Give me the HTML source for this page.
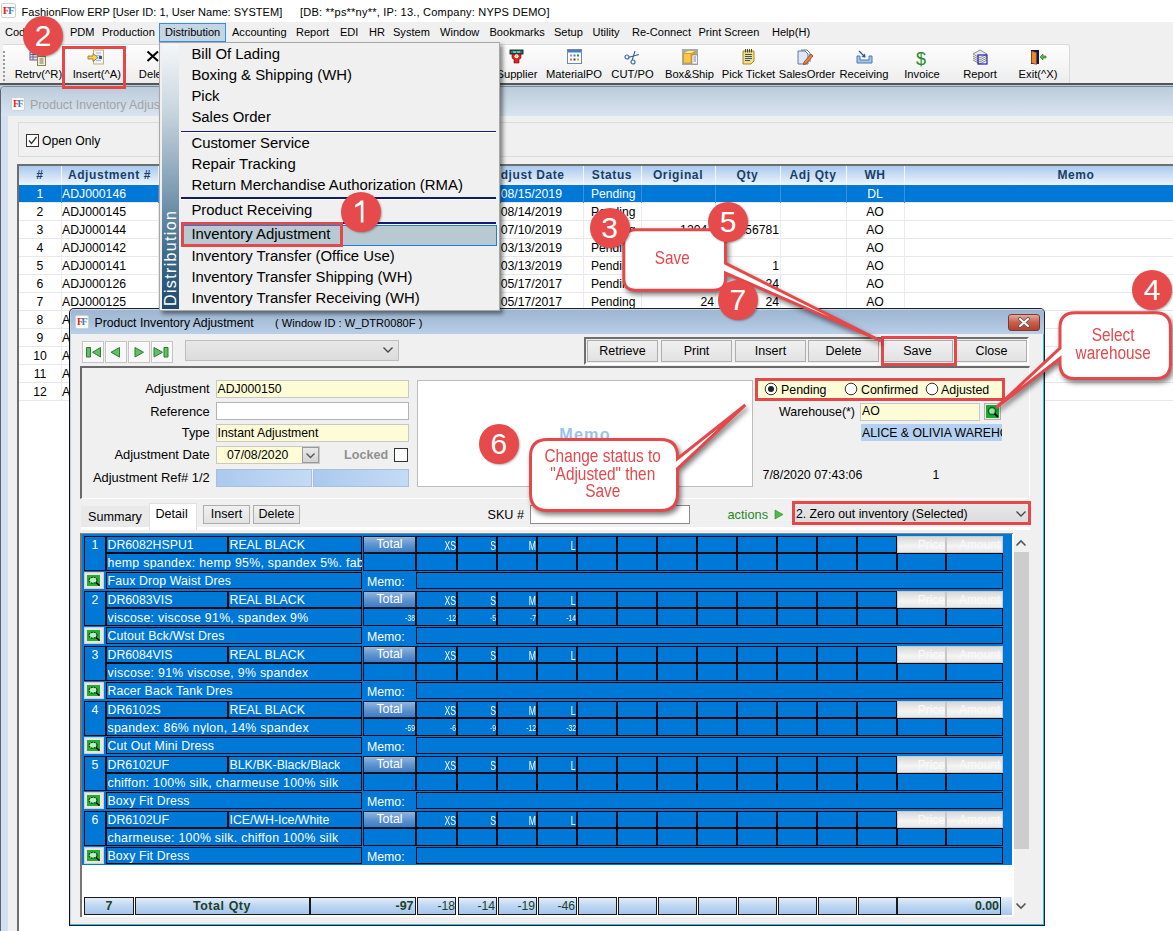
<!DOCTYPE html><html><head><meta charset="utf-8"><style>
*{margin:0;padding:0;box-sizing:border-box}
html,body{width:1173px;height:931px;overflow:hidden;background:#f0f0f0;font-family:"Liberation Sans",sans-serif;font-size:12px;color:#000;position:relative}
.a{position:absolute}
.t{position:absolute;white-space:nowrap;line-height:1}
.ff{position:absolute;width:14px;height:14px;background:#fff;border:1px solid #cfcfcf;border-radius:2px;font-family:"Liberation Serif",serif;font-weight:bold;font-size:10px;line-height:12px;text-align:center;letter-spacing:-1.5px;padding-right:1px}
.ff b{color:#e82020}.ff i{font-style:normal;color:#3a7fb0}
.circ{position:absolute;width:40px;height:40px;border-radius:50%;background:#e64a4a;color:#fff;font-size:30px;line-height:40px;text-align:center;box-shadow:1px 1px 2px rgba(0,0,0,.3)}
.btn{position:absolute;height:22px;background:linear-gradient(#f0f0f0,#e2e2e2);border:1px solid #adadad;font-size:12.5px;line-height:20px;text-align:center}

.c{position:absolute;border:1px solid #050a10;background:#0078d7}
.ct{position:absolute;white-space:nowrap;line-height:1;color:#fff}
.nar{position:absolute;white-space:nowrap;line-height:1;color:#fff;transform-origin:100% 50%}
</style></head><body>
<div class="a" style="left:0px;top:0px;width:1173px;height:22px;background:#fff"></div>
<div class="ff" style="left:1px;top:3px;width:15px;height:15px;font-size:11px;line-height:13px"><b>F</b><i>F</i></div>
<div class="t " style="left:21.5px;top:6.9px;font-size:11.05px;color:#000;">FashionFlow ERP [User ID: 1, User Name: SYSTEM]</div>
<div class="t " style="left:300.0px;top:6.9px;font-size:11.05px;color:#000;letter-spacing:0.2px">[DB: **ps**ny**, IP: 13., Company: NYPS DEMO]</div>
<div class="a" style="left:0px;top:22px;width:1173px;height:21px;background:#f0f0f0"></div>
<div class="a" style="left:159px;top:23px;width:67px;height:19px;background:#c4d5e3;border:1px solid #3d8ee0"></div>
<div class="t " style="left:5.0px;top:27.2px;font-size:11.05px;color:#000;">Code</div>
<div class="t " style="left:70.0px;top:27.2px;font-size:11.05px;color:#000;">PDM</div>
<div class="t " style="left:102.0px;top:27.2px;font-size:11.05px;color:#000;">Production</div>
<div class="t " style="left:165.0px;top:27.2px;font-size:11.05px;color:#000;">Distribution</div>
<div class="t " style="left:232.0px;top:27.2px;font-size:11.05px;color:#000;">Accounting</div>
<div class="t " style="left:296.0px;top:27.2px;font-size:11.05px;color:#000;">Report</div>
<div class="t " style="left:340.0px;top:27.2px;font-size:11.05px;color:#000;">EDI</div>
<div class="t " style="left:369.0px;top:27.2px;font-size:11.05px;color:#000;">HR</div>
<div class="t " style="left:393.0px;top:27.2px;font-size:11.05px;color:#000;">System</div>
<div class="t " style="left:440.0px;top:27.2px;font-size:11.05px;color:#000;">Window</div>
<div class="t " style="left:489.5px;top:27.2px;font-size:11.05px;color:#000;">Bookmarks</div>
<div class="t " style="left:554.0px;top:27.2px;font-size:11.05px;color:#000;">Setup</div>
<div class="t " style="left:592.5px;top:27.2px;font-size:11.05px;color:#000;">Utility</div>
<div class="t " style="left:632.0px;top:27.2px;font-size:11.05px;color:#000;">Re-Connect</div>
<div class="t " style="left:698.5px;top:27.2px;font-size:11.05px;color:#000;">Print Screen</div>
<div class="t " style="left:772.0px;top:27.2px;font-size:11.05px;color:#000;">Help(H)</div>
<div class="a" style="left:0px;top:43px;width:1173px;height:41px;background:#f0f0f0"></div>
<div class="a" style="left:3px;top:44px;width:1067px;height:40px;background:linear-gradient(#fdfdfd,#f6f6f6 50%,#ececec);border:1px solid #dadada;border-left:none;border-bottom:none;border-radius:0 3px 0 0"></div>
<div class="a" style="left:3px;top:51px;width:2px;height:2px;background:#9a9a9a"></div>
<div class="a" style="left:3px;top:55px;width:2px;height:2px;background:#9a9a9a"></div>
<div class="a" style="left:3px;top:59px;width:2px;height:2px;background:#9a9a9a"></div>
<div class="a" style="left:3px;top:63px;width:2px;height:2px;background:#9a9a9a"></div>
<div class="a" style="left:3px;top:67px;width:2px;height:2px;background:#9a9a9a"></div>
<div class="a" style="left:3px;top:71px;width:2px;height:2px;background:#9a9a9a"></div>
<div class="a" style="left:3px;top:75px;width:2px;height:2px;background:#9a9a9a"></div>
<div class="a" style="left:3px;top:79px;width:2px;height:2px;background:#9a9a9a"></div>
<div class="a" style="left:0px;top:83px;width:1173px;height:2px;background:#555"></div>
<div class="t " style="left:-261.6px;width:600px;text-align:center;top:69.1px;font-size:11.2px;color:#000;">Retrv(^R)</div>
<div class="t " style="left:-203.2px;width:600px;text-align:center;top:69.1px;font-size:11.2px;color:#000;">Insert(^A)</div>
<div class="t " style="left:-145.0px;width:600px;text-align:center;top:69.1px;font-size:11.2px;color:#000;">Delete</div>
<div class="t " style="left:217.0px;width:600px;text-align:center;top:69.1px;font-size:11.2px;color:#000;">Supplier</div>
<div class="t " style="left:274.0px;width:600px;text-align:center;top:69.1px;font-size:11.2px;color:#000;">MaterialPO</div>
<div class="t " style="left:332.5px;width:600px;text-align:center;top:69.1px;font-size:11.2px;color:#000;">CUT/PO</div>
<div class="t " style="left:389.5px;width:600px;text-align:center;top:69.1px;font-size:11.2px;color:#000;">Box&amp;Ship</div>
<div class="t " style="left:448.5px;width:600px;text-align:center;top:69.1px;font-size:11.2px;color:#000;">Pick Ticket</div>
<div class="t " style="left:507.0px;width:600px;text-align:center;top:69.1px;font-size:11.2px;color:#000;">SalesOrder</div>
<div class="t " style="left:564.0px;width:600px;text-align:center;top:69.1px;font-size:11.2px;color:#000;">Receiving</div>
<div class="t " style="left:622.0px;width:600px;text-align:center;top:69.1px;font-size:11.2px;color:#000;">Invoice</div>
<div class="t " style="left:680.0px;width:600px;text-align:center;top:69.1px;font-size:11.2px;color:#000;">Report</div>
<div class="t " style="left:738.0px;width:600px;text-align:center;top:69.1px;font-size:11.2px;color:#000;">Exit(^X)</div>
<svg class="a" style="left:29px;top:51px" width="18" height="15" viewBox="0 0 18 15"><rect x="1" y="1" width="8" height="8" fill="#e8e0ee" stroke="#6a5a80" stroke-width="1"/><path d="M1 3.5H9M1 6H9M4 1V9" stroke="#6a5a80" stroke-width="0.9"/><rect x="8.5" y="5.5" width="8" height="9" fill="#f4f0dc" stroke="#8a8050" stroke-width="1"/><path d="M10.5 8H14.5M10.5 10H14.5M10.5 12H14.5" stroke="#6a6040" stroke-width="0.9"/></svg>
<svg class="a" style="left:87px;top:49px" width="18" height="16" viewBox="0 0 18 16"><rect x="6.5" y="1" width="10" height="14" fill="#eef4fb" stroke="#c8b070" stroke-width="1"/><path d="M9 4H14M9 6.5H14M9 9H14M9 11.5H14" stroke="#9ab0d0" stroke-width="0.9"/><rect x="12" y="7" width="3" height="3" fill="#2a5aa0"/><path d="M1 7H6V4.5L11 8.5L6 12.5V10H1Z" fill="#f8d060" stroke="#a07820" stroke-width="0.9"/></svg>
<svg class="a" style="left:146px;top:50px" width="14" height="12" viewBox="0 0 14 12"><path d="M1.5 1.5L12 11M12 1.5L1.5 11" stroke="#000" stroke-width="2"/></svg>
<svg class="a" style="left:509px;top:49px" width="15" height="15" viewBox="0 0 15 15"><rect x="1" y="1" width="13" height="4" fill="#208080" stroke="#000" stroke-width="0.8"/><path d="M4 3H7M8 3H11" stroke="#fff" stroke-width="0.8"/><path d="M3 5V8Q3 10 5 10V14H10V10Q12 10 12 8V5Z" fill="#e82020" stroke="#600" stroke-width="0.6"/><circle cx="7.5" cy="7.3" r="2" fill="#fff"/><circle cx="7.5" cy="7.3" r="1" fill="#dd0"/></svg>
<svg class="a" style="left:567px;top:49px" width="15" height="15" viewBox="0 0 15 15"><rect x="0.5" y="0.5" width="14" height="14" fill="#fafcff" stroke="#6a8ab0" stroke-width="1"/><rect x="1" y="1" width="13" height="2.5" fill="#4a7ac0"/><rect x="3" y="5.5" width="2" height="2" fill="#9090d0"/><rect x="6.5" y="5.5" width="2" height="2" fill="#3080e0"/><rect x="10" y="5.5" width="2" height="2" fill="#20a020"/><rect x="3" y="9.5" width="2" height="2" fill="#f07030"/><rect x="6.5" y="9.5" width="2" height="2" fill="#2040a0"/><rect x="10" y="9.5" width="2" height="2" fill="#e0a020"/></svg>
<svg class="a" style="left:624px;top:50px" width="16" height="15" viewBox="0 0 16 15"><circle cx="3" cy="7" r="2" fill="none" stroke="#3a70b0" stroke-width="1.2"/><circle cx="9" cy="12" r="2" fill="none" stroke="#3a70b0" stroke-width="1.2"/><path d="M4.8 7.3L15 4.5M8.2 10.2L11 1" stroke="#3a6090" stroke-width="1.1"/></svg>
<svg class="a" style="left:682px;top:49px" width="17" height="16" viewBox="0 0 17 16"><rect x="0" y="0" width="16" height="16" fill="#a8a8a8"/><path d="M1.5 4.5L6 2H13L9 4.5Z" fill="#ffe890"/><path d="M1.5 4.5H9V14H1.5Z" fill="#f8c840" stroke="#b08010" stroke-width="0.5"/><path d="M9 4.5L13 2V11L9 14Z" fill="#e0a020"/><rect x="10" y="6" width="5.5" height="9" fill="#f4f4f4" stroke="#777" stroke-width="0.5"/><path d="M11.5 8H14M11.5 10H14M11.5 12H14" stroke="#5070b0" stroke-width="0.8"/></svg>
<svg class="a" style="left:742px;top:49px" width="13" height="16" viewBox="0 0 13 16"><path d="M1 2H12V12L9 15H1Z" fill="#f8e070" stroke="#a08020" stroke-width="0.9"/><path d="M3.5 0V3.5M5.5 0V3.5M7.5 0V3.5M9.5 0V3.5" stroke="#444" stroke-width="1"/><path d="M3 5.5H10M3 7.5H10M3 9.5H10M3 11.5H8" stroke="#3050a0" stroke-width="1"/></svg>
<svg class="a" style="left:797px;top:49px" width="18" height="16" viewBox="0 0 18 16"><path d="M1 2H8L11 5V15H1Z" fill="#dce8f8" stroke="#5a6a8a" stroke-width="0.9"/><path d="M4 1H10L13 4V13" fill="none" stroke="#5a6a8a" stroke-width="0.9"/><path d="M7 13L14 5L16 7L9 15L6.5 15.5Z" fill="#f08040" stroke="#803010" stroke-width="0.7"/></svg>
<svg class="a" style="left:856px;top:50px" width="17" height="14" viewBox="0 0 17 14"><path d="M1 6V13H16V6H13V10H4V6Z" fill="#a8c4e8" stroke="#4a78b8" stroke-width="1"/><path d="M3 1L9 7" stroke="#2a5a9a" stroke-width="1.2"/><path d="M9.5 7.5L5.5 7L9 3.5Z" fill="#2a5a9a"/></svg>
<div class="t " style="left:621.0px;width:600px;text-align:center;top:49.6px;font-size:18px;color:#2a8a2a;">$</div>
<svg class="a" style="left:972px;top:49px" width="17" height="16" viewBox="0 0 17 16"><path d="M1 5L8 1L15 5L8 9Z" fill="#e8e8e8" stroke="#666" stroke-width="0.7"/><path d="M1 7L8 11L15 7M1 9L8 13L15 9M1 11L8 15L15 11" fill="none" stroke="#777" stroke-width="0.9"/><rect x="6" y="6" width="9" height="9" fill="none" stroke="#2020c0" stroke-width="1.2"/></svg>
<svg class="a" style="left:1030px;top:49px" width="17" height="16" viewBox="0 0 17 16"><rect x="1" y="1" width="8" height="14" fill="#101850"/><path d="M1.5 2L6.5 3.5V15.5L1.5 14Z" fill="#e88a2a" stroke="#804010" stroke-width="0.6"/><path d="M10 8L13 5V7H16V9H13V11Z" fill="#40c040" stroke="#207020" stroke-width="0.6"/></svg>
<div class="a" style="left:0px;top:85px;width:1173px;height:846px;background:linear-gradient(#b8c8d8,#d6e2ee 32px,#d6e2ee)"></div>
<div class="a" style="left:0px;top:86px;width:1180px;height:850px;background:#f0f0f0;border-left:1px solid #5a6470;border-top:1px solid #7d8c9c;border-radius:5px 0 0 0"></div>
<div class="a" style="left:1px;top:116px;width:7px;height:820px;background:#d2e1f0"></div>
<div class="a" style="left:1px;top:87px;width:1180px;height:29px;background:linear-gradient(#bccbdb,#d8e4f0);border-radius:4px 0 0 0"></div>
<div class="ff" style="left:11px;top:97px"><b>F</b><i>F</i></div>
<div class="t " style="left:30.0px;top:99.1px;font-size:12.3px;color:#a3a3a3;">Product Inventory Adjustment</div>
<div class="a" style="left:18px;top:122px;width:1160px;height:35px;border:1px solid #dcdcdc;border-right:none;background:#f0f0f0"></div>
<div class="a" style="left:26px;top:134px;width:13px;height:13px;background:#fff;border:1px solid #333"></div>
<svg class="a" style="left:27px;top:135px" width="11" height="11"><path d="M2 5.5 L4.5 8.5 L9.5 2" stroke="#333" stroke-width="1.3" fill="none"/></svg>
<div class="t " style="left:42.0px;top:135.2px;font-size:12.2px;color:#000;">Open Only</div>
<div class="a" style="left:17px;top:164px;width:1160px;height:770px;background:#fff;border-left:2px solid #6e6e6e;border-top:2px solid #6e6e6e"></div>
<div class="a" style="left:19px;top:166px;width:1160px;height:19px;background:linear-gradient(#a9c9ee,#dbe8f7 70%,#eef4fb)"></div>
<div class="a" style="left:19px;top:185px;width:1160px;height:18px;background:#0078d7"></div>
<div class="a" style="left:19px;top:202px;width:1160px;height:1px;background:#e8e8e8"></div>
<div class="a" style="left:19px;top:220px;width:1160px;height:1px;background:#e8e8e8"></div>
<div class="a" style="left:19px;top:238px;width:1160px;height:1px;background:#e8e8e8"></div>
<div class="a" style="left:19px;top:256px;width:1160px;height:1px;background:#e8e8e8"></div>
<div class="a" style="left:19px;top:274px;width:1160px;height:1px;background:#e8e8e8"></div>
<div class="a" style="left:19px;top:292px;width:1160px;height:1px;background:#e8e8e8"></div>
<div class="a" style="left:19px;top:310px;width:1160px;height:1px;background:#e8e8e8"></div>
<div class="a" style="left:19px;top:328px;width:1160px;height:1px;background:#e8e8e8"></div>
<div class="a" style="left:19px;top:346px;width:1160px;height:1px;background:#e8e8e8"></div>
<div class="a" style="left:19px;top:364px;width:1160px;height:1px;background:#e8e8e8"></div>
<div class="a" style="left:19px;top:382px;width:1160px;height:1px;background:#e8e8e8"></div>
<div class="a" style="left:19px;top:400px;width:1160px;height:1px;background:#e8e8e8"></div>
<div class="a" style="left:61px;top:166px;width:1px;height:19px;background:#f4f8fc"></div>
<div class="a" style="left:61px;top:185px;width:1px;height:18px;background:#3f8fd8"></div>
<div class="a" style="left:61px;top:203px;width:1px;height:198px;background:#ececec"></div>
<div class="a" style="left:158px;top:166px;width:1px;height:19px;background:#f4f8fc"></div>
<div class="a" style="left:158px;top:185px;width:1px;height:18px;background:#3f8fd8"></div>
<div class="a" style="left:158px;top:203px;width:1px;height:198px;background:#ececec"></div>
<div class="a" style="left:300px;top:166px;width:1px;height:19px;background:#f4f8fc"></div>
<div class="a" style="left:300px;top:185px;width:1px;height:18px;background:#3f8fd8"></div>
<div class="a" style="left:300px;top:203px;width:1px;height:198px;background:#ececec"></div>
<div class="a" style="left:420px;top:166px;width:1px;height:19px;background:#f4f8fc"></div>
<div class="a" style="left:420px;top:185px;width:1px;height:18px;background:#3f8fd8"></div>
<div class="a" style="left:420px;top:203px;width:1px;height:198px;background:#ececec"></div>
<div class="a" style="left:500px;top:166px;width:1px;height:19px;background:#f4f8fc"></div>
<div class="a" style="left:500px;top:185px;width:1px;height:18px;background:#3f8fd8"></div>
<div class="a" style="left:500px;top:203px;width:1px;height:198px;background:#ececec"></div>
<div class="a" style="left:583px;top:166px;width:1px;height:19px;background:#f4f8fc"></div>
<div class="a" style="left:583px;top:185px;width:1px;height:18px;background:#3f8fd8"></div>
<div class="a" style="left:583px;top:203px;width:1px;height:198px;background:#ececec"></div>
<div class="a" style="left:641px;top:166px;width:1px;height:19px;background:#f4f8fc"></div>
<div class="a" style="left:641px;top:185px;width:1px;height:18px;background:#3f8fd8"></div>
<div class="a" style="left:641px;top:203px;width:1px;height:198px;background:#ececec"></div>
<div class="a" style="left:715px;top:166px;width:1px;height:19px;background:#f4f8fc"></div>
<div class="a" style="left:715px;top:185px;width:1px;height:18px;background:#3f8fd8"></div>
<div class="a" style="left:715px;top:203px;width:1px;height:198px;background:#ececec"></div>
<div class="a" style="left:780px;top:166px;width:1px;height:19px;background:#f4f8fc"></div>
<div class="a" style="left:780px;top:185px;width:1px;height:18px;background:#3f8fd8"></div>
<div class="a" style="left:780px;top:203px;width:1px;height:198px;background:#ececec"></div>
<div class="a" style="left:846px;top:166px;width:1px;height:19px;background:#f4f8fc"></div>
<div class="a" style="left:846px;top:185px;width:1px;height:18px;background:#3f8fd8"></div>
<div class="a" style="left:846px;top:203px;width:1px;height:198px;background:#ececec"></div>
<div class="a" style="left:904px;top:166px;width:1px;height:19px;background:#f4f8fc"></div>
<div class="a" style="left:904px;top:185px;width:1px;height:18px;background:#3f8fd8"></div>
<div class="a" style="left:904px;top:203px;width:1px;height:198px;background:#ececec"></div>
<div class="t " style="left:-260.0px;width:600px;text-align:center;top:169.3px;font-size:12px;color:#173f6b;font-weight:bold;letter-spacing:0.6px">#</div>
<div class="t " style="left:-190.5px;width:600px;text-align:center;top:169.3px;font-size:12px;color:#173f6b;font-weight:bold;letter-spacing:0.6px">Adjustment #</div>
<div class="t " style="left:228.0px;width:600px;text-align:center;top:169.3px;font-size:12px;color:#173f6b;font-weight:bold;letter-spacing:0.6px">Adjust Date</div>
<div class="t " style="left:312.0px;width:600px;text-align:center;top:169.3px;font-size:12px;color:#173f6b;font-weight:bold;letter-spacing:0.6px">Status</div>
<div class="t " style="left:378.0px;width:600px;text-align:center;top:169.3px;font-size:12px;color:#173f6b;font-weight:bold;letter-spacing:0.6px">Original</div>
<div class="t " style="left:447.5px;width:600px;text-align:center;top:169.3px;font-size:12px;color:#173f6b;font-weight:bold;letter-spacing:0.6px">Qty</div>
<div class="t " style="left:513.0px;width:600px;text-align:center;top:169.3px;font-size:12px;color:#173f6b;font-weight:bold;letter-spacing:0.6px">Adj Qty</div>
<div class="t " style="left:575.0px;width:600px;text-align:center;top:169.3px;font-size:12px;color:#173f6b;font-weight:bold;letter-spacing:0.6px">WH</div>
<div class="t " style="left:776.0px;width:600px;text-align:center;top:169.3px;font-size:12px;color:#173f6b;font-weight:bold;letter-spacing:0.6px">Memo</div>
<div class="t " style="left:-260.0px;width:600px;text-align:center;top:188.0px;font-size:12.2px;color:#fff;">1</div>
<div class="t " style="left:62.0px;top:187.9px;font-size:12.25px;color:#fff;">ADJ000146</div>
<div class="t " style="right:611.0px;top:187.9px;font-size:12.25px;color:#fff;">08/15/2019</div>
<div class="t " style="left:591.0px;top:188.1px;font-size:12.1px;color:#fff;">Pending</div>
<div class="t " style="left:575.0px;width:600px;text-align:center;top:188.0px;font-size:12.2px;color:#fff;">DL</div>
<div class="t " style="left:-260.0px;width:600px;text-align:center;top:206.0px;font-size:12.2px;color:#000;">2</div>
<div class="t " style="left:62.0px;top:205.9px;font-size:12.25px;color:#000;">ADJ000145</div>
<div class="t " style="right:611.0px;top:205.9px;font-size:12.25px;color:#000;">08/14/2019</div>
<div class="t " style="left:591.0px;top:206.1px;font-size:12.1px;color:#000;">Pending</div>
<div class="t " style="left:575.0px;width:600px;text-align:center;top:206.0px;font-size:12.2px;color:#000;">AO</div>
<div class="t " style="left:-260.0px;width:600px;text-align:center;top:224.0px;font-size:12.2px;color:#000;">3</div>
<div class="t " style="left:62.0px;top:223.9px;font-size:12.25px;color:#000;">ADJ000144</div>
<div class="t " style="right:611.0px;top:223.9px;font-size:12.25px;color:#000;">07/10/2019</div>
<div class="t " style="left:591.0px;top:224.1px;font-size:12.1px;color:#000;">Pending</div>
<div class="t " style="right:459.0px;top:224.0px;font-size:12.2px;color:#000;">12044</div>
<div class="t " style="right:394.0px;top:224.0px;font-size:12.2px;color:#000;">156781</div>
<div class="t " style="left:575.0px;width:600px;text-align:center;top:224.0px;font-size:12.2px;color:#000;">AO</div>
<div class="t " style="left:-260.0px;width:600px;text-align:center;top:242.0px;font-size:12.2px;color:#000;">4</div>
<div class="t " style="left:62.0px;top:241.9px;font-size:12.25px;color:#000;">ADJ000142</div>
<div class="t " style="right:611.0px;top:241.9px;font-size:12.25px;color:#000;">03/13/2019</div>
<div class="t " style="left:591.0px;top:242.1px;font-size:12.1px;color:#000;">Pending</div>
<div class="t " style="left:575.0px;width:600px;text-align:center;top:242.0px;font-size:12.2px;color:#000;">AO</div>
<div class="t " style="left:-260.0px;width:600px;text-align:center;top:260.0px;font-size:12.2px;color:#000;">5</div>
<div class="t " style="left:62.0px;top:259.9px;font-size:12.25px;color:#000;">ADJ000141</div>
<div class="t " style="right:611.0px;top:259.9px;font-size:12.25px;color:#000;">03/13/2019</div>
<div class="t " style="left:591.0px;top:260.1px;font-size:12.1px;color:#000;">Pending</div>
<div class="t " style="right:394.0px;top:260.0px;font-size:12.2px;color:#000;">1</div>
<div class="t " style="left:575.0px;width:600px;text-align:center;top:260.0px;font-size:12.2px;color:#000;">AO</div>
<div class="t " style="left:-260.0px;width:600px;text-align:center;top:278.0px;font-size:12.2px;color:#000;">6</div>
<div class="t " style="left:62.0px;top:277.9px;font-size:12.25px;color:#000;">ADJ000126</div>
<div class="t " style="right:611.0px;top:277.9px;font-size:12.25px;color:#000;">05/17/2017</div>
<div class="t " style="left:591.0px;top:278.1px;font-size:12.1px;color:#000;">Pending</div>
<div class="t " style="right:394.0px;top:278.0px;font-size:12.2px;color:#000;">24</div>
<div class="t " style="left:575.0px;width:600px;text-align:center;top:278.0px;font-size:12.2px;color:#000;">AO</div>
<div class="t " style="left:-260.0px;width:600px;text-align:center;top:296.0px;font-size:12.2px;color:#000;">7</div>
<div class="t " style="left:62.0px;top:295.9px;font-size:12.25px;color:#000;">ADJ000125</div>
<div class="t " style="right:611.0px;top:295.9px;font-size:12.25px;color:#000;">05/17/2017</div>
<div class="t " style="left:591.0px;top:296.1px;font-size:12.1px;color:#000;">Pending</div>
<div class="t " style="right:459.0px;top:296.0px;font-size:12.2px;color:#000;">24</div>
<div class="t " style="right:394.0px;top:296.0px;font-size:12.2px;color:#000;">24</div>
<div class="t " style="left:575.0px;width:600px;text-align:center;top:296.0px;font-size:12.2px;color:#000;">AO</div>
<div class="t " style="left:-260.0px;width:600px;text-align:center;top:314.0px;font-size:12.2px;color:#000;">8</div>
<div class="t " style="left:62.0px;top:313.9px;font-size:12.25px;color:#000;">ADJ000124</div>
<div class="t " style="left:-260.0px;width:600px;text-align:center;top:332.0px;font-size:12.2px;color:#000;">9</div>
<div class="t " style="left:62.0px;top:331.9px;font-size:12.25px;color:#000;">ADJ000123</div>
<div class="t " style="left:-260.0px;width:600px;text-align:center;top:350.0px;font-size:12.2px;color:#000;">10</div>
<div class="t " style="left:62.0px;top:349.9px;font-size:12.25px;color:#000;">ADJ000122</div>
<div class="t " style="left:-260.0px;width:600px;text-align:center;top:368.0px;font-size:12.2px;color:#000;">11</div>
<div class="t " style="left:62.0px;top:367.9px;font-size:12.25px;color:#000;">ADJ000121</div>
<div class="t " style="left:-260.0px;width:600px;text-align:center;top:386.0px;font-size:12.2px;color:#000;">12</div>
<div class="t " style="left:62.0px;top:385.9px;font-size:12.25px;color:#000;">ADJ000120</div>
<div class="a" style="left:69px;top:308px;width:976px;height:618px;background:#f0f0f0;border:1px solid #222;border-left:1px solid #111;border-radius:5px 5px 0 0;box-shadow:inset -1px -1px 0 #38b8e8,inset 1px 0 0 #b8d0ea"></div>
<div class="a" style="left:71px;top:309px;width:973px;height:25px;background:linear-gradient(#dfe8f2 0,#9fb7d2 1.5px,#a8bfda 45%,#b9cfe8);border-radius:4px 4px 0 0"></div>
<div class="ff" style="left:75px;top:315px"><b>F</b><i>F</i></div>
<div class="t " style="left:94.5px;top:316.9px;font-size:12.2px;color:#000;">Product Inventory Adjustment</div>
<div class="t " style="left:275.0px;top:317.8px;font-size:11.1px;color:#000;">( Window ID : W_DTR0080F )</div>
<div class="a" style="left:1008px;top:314px;width:32px;height:17px;background:linear-gradient(#e8a89c,#c8604c 50%,#b84028);border:1px solid #7a3a30;border-radius:3px"></div>
<svg class="a" style="left:1017px;top:316px" width="14" height="13"><path d="M3 3 L11 10 M11 3 L3 10" stroke="#555" stroke-width="3.6" stroke-linecap="round"/><path d="M3 3 L11 10 M11 3 L3 10" stroke="#fff" stroke-width="2" stroke-linecap="round"/></svg>
<div class="a" style="left:82px;top:341px;width:22px;height:22px;background:#f8f8f8;border:1px solid #c4c4c4;box-shadow:inset 1px 1px 0 #fff"></div>
<div class="a" style="left:105px;top:341px;width:22px;height:22px;background:#f8f8f8;border:1px solid #c4c4c4;box-shadow:inset 1px 1px 0 #fff"></div>
<div class="a" style="left:128px;top:341px;width:22px;height:22px;background:#f8f8f8;border:1px solid #c4c4c4;box-shadow:inset 1px 1px 0 #fff"></div>
<div class="a" style="left:151px;top:341px;width:22px;height:22px;background:#f8f8f8;border:1px solid #c4c4c4;box-shadow:inset 1px 1px 0 #fff"></div>
<svg class="a" style="left:82px;top:341px" width="92" height="22">
<g fill="#62bd66" stroke="#2d7d32" stroke-width="1" stroke-linejoin="round">
<rect x="4.5" y="6.5" width="4" height="9.5"/><path d="M10.5 11.25 L18.5 6.5 L18.5 16 Z"/>
<path d="M29 11.25 L37.5 6.5 L37.5 16 Z"/>
<path d="M53 6.5 L61.5 11.25 L53 16 Z"/>
<path d="M72 6.5 L80.5 11.25 L72 16 Z"/><rect x="82" y="6.5" width="4" height="9.5"/>
</g></svg>
<div class="a" style="left:185px;top:340px;width:214px;height:21px;background:linear-gradient(#e8e8e8,#dcdcdc);border:1px solid #bdbdbd"></div>
<svg class="a" style="left:382px;top:346px" width="12" height="8"><path d="M1.5 1.5 L6 6 L10.5 1.5" stroke="#444" stroke-width="1.3" fill="none"/></svg>
<div class="a" style="left:584px;top:337px;width:445px;height:28px;background:#f0f0f0;border:2px solid #6e6e6e;border-right-color:#fff;border-bottom-color:#fff"></div>
<div class="btn" style="left:587px;top:340px;width:71px">Retrieve</div>
<div class="btn" style="left:661px;top:340px;width:71px">Print</div>
<div class="btn" style="left:735px;top:340px;width:71px">Insert</div>
<div class="btn" style="left:808px;top:340px;width:71px">Delete</div>
<div class="btn" style="left:882px;top:340px;width:71px">Save</div>
<div class="btn" style="left:956px;top:340px;width:71px">Close</div>
<div class="a" style="left:80px;top:366px;width:950px;height:133px;background:#f0f0f0;border:2px solid #6a6a6a;border-right:1px solid #fff;border-bottom:1px solid #fff"></div>
<div class="t " style="right:963.3px;top:382.7px;font-size:12.9px;color:#000;">Adjustment</div>
<div class="t " style="right:963.3px;top:405.7px;font-size:12.9px;color:#000;">Reference</div>
<div class="t " style="right:963.3px;top:426.7px;font-size:12.9px;color:#000;">Type</div>
<div class="t " style="right:963.3px;top:448.7px;font-size:12.9px;color:#000;">Adjustment Date</div>
<div class="t " style="right:963.3px;top:471.7px;font-size:12.9px;color:#000;">Adjustment Ref# 1/2</div>
<div class="a" style="left:216px;top:380px;width:193px;height:18px;background:#fdfcd6;border:1px solid #c8c8c8"></div>
<div class="t " style="left:217.5px;top:382.6px;font-size:12.25px;color:#000;">ADJ000150</div>
<div class="a" style="left:216px;top:402px;width:193px;height:18px;background:#fff;border:1px solid #b4b4b4"></div>
<div class="a" style="left:216px;top:424px;width:193px;height:18px;background:#fdfcd6;border:1px solid #c8c8c8"></div>
<div class="t " style="left:217.5px;top:426.6px;font-size:12.25px;color:#000;">Instant Adjustment</div>
<div class="a" style="left:216px;top:446px;width:104px;height:18px;background:#fdfcd6;border:1px solid #c8c8c8"></div>
<div class="t " style="left:227.0px;top:449.1px;font-size:12.25px;color:#000;">07/08/2020</div>
<div class="a" style="left:302px;top:447px;width:17px;height:16px;background:linear-gradient(#e8e8e8,#d4d4d4);border:1px solid #9a9a9a"></div>
<svg class="a" style="left:305px;top:452px" width="11" height="8"><path d="M1.5 1.5 L5.5 5.5 L9.5 1.5" stroke="#555" stroke-width="1.3" fill="none"/></svg>
<div class="t " style="left:344.0px;top:448.8px;font-size:12.6px;color:#909090;font-weight:bold;">Locked</div>
<div class="a" style="left:394px;top:448px;width:14px;height:14px;background:#fff;border:1px solid #333"></div>
<div class="a" style="left:216px;top:469px;width:96px;height:18px;background:linear-gradient(90deg,#abc9ee,#c5dbf5);border:1px solid #a8c0dc"></div>
<div class="a" style="left:313px;top:469px;width:96px;height:18px;background:linear-gradient(90deg,#abc9ee,#c5dbf5);border:1px solid #a8c0dc"></div>
<div class="a" style="left:417px;top:380px;width:336px;height:107px;background:#fff;border:1px solid #bcbcbc"></div>
<div class="t " style="left:285.0px;width:600px;text-align:center;top:426.3px;font-size:16.2px;color:#9cc3ec;font-weight:bold;letter-spacing:1.2px">Memo</div>
<div class="a" style="left:755px;top:378px;width:249px;height:22px;background:#fdfcd6"></div>
<svg class="a" style="left:764px;top:382px" width="14" height="14"><circle cx="7" cy="7" r="5.8" fill="#fff" stroke="#333" stroke-width="1"/><circle cx="7" cy="7" r="3" fill="#222"/></svg>
<div class="t " style="left:781.0px;top:383.5px;font-size:12.4px;color:#000;">Pending</div>
<svg class="a" style="left:844px;top:382px" width="14" height="14"><circle cx="7" cy="7" r="5.8" fill="#fff" stroke="#333" stroke-width="1"/></svg>
<div class="t " style="left:861.0px;top:383.5px;font-size:12.4px;color:#000;">Confirmed</div>
<svg class="a" style="left:925px;top:382px" width="14" height="14"><circle cx="7" cy="7" r="5.8" fill="#fff" stroke="#333" stroke-width="1"/></svg>
<div class="t " style="left:941.0px;top:383.5px;font-size:12.4px;color:#000;">Adjusted</div>
<div class="t " style="right:318.0px;top:406.0px;font-size:12.4px;color:#000;">Warehouse(*)</div>
<div class="a" style="left:860px;top:403px;width:120px;height:18px;background:#fdfcd6;border:1px solid #c8c8c8"></div>
<div class="t " style="left:862.0px;top:405.1px;font-size:12.25px;color:#000;">AO</div>
<div class="a" style="left:984px;top:403px;width:17px;height:17px;background:#e8e8e8;border:1px solid #b0b0b0"></div>
<div class="a" style="left:986px;top:405px;width:13px;height:13px;background:#1fa82a"></div>
<svg class="a" style="left:986px;top:405px" width="13" height="13"><circle cx="6" cy="6" r="3.6" fill="#9be39b" stroke="#063" stroke-width="1.5"/><path d="M8.5 8.5 L12 12" stroke="#000" stroke-width="1.8"/></svg>
<div class="a" style="left:861px;top:424px;width:141px;height:17px;background:#b5d1f1"></div>
<div class="t " style="left:862.0px;top:427.1px;font-size:12.25px;color:#000;width:140px;overflow:hidden">ALICE &amp; OLIVIA WAREHOUSE</div>
<div class="t " style="left:762.5px;top:469.2px;font-size:12.4px;color:#000;">7/8/2020 07:43:06</div>
<div class="t " style="left:932.5px;top:469.2px;font-size:12.4px;color:#000;">1</div>
<div class="a" style="left:81px;top:506px;width:68px;height:21px;background:#e9e9e9"></div>
<div class="a" style="left:81px;top:527px;width:949px;height:3px;background:#fff"></div>
<div class="t " style="left:88.0px;top:510.8px;font-size:12.6px;color:#000;">Summary</div>
<div class="a" style="left:149px;top:503px;width:48px;height:27px;background:#fff;border:1px solid #e0e0e0;border-bottom:none"></div>
<div class="t " style="left:155.5px;top:508.3px;font-size:12.6px;color:#000;">Detail</div>
<div class="btn" style="left:203px;top:505px;width:47px;height:19px;line-height:17px">Insert</div>
<div class="btn" style="left:253px;top:505px;width:47px;height:19px;line-height:17px">Delete</div>
<div class="t " style="left:487.5px;top:508.8px;font-size:12.6px;color:#000;">SKU #</div>
<div class="a" style="left:530px;top:505px;width:160px;height:19px;background:#fff;border:1px solid #8a8a8a"></div>
<div class="t " style="left:727.5px;top:508.5px;font-size:12.8px;color:#1e8a1e;">actions</div>
<svg class="a" style="left:774px;top:509px" width="10" height="11"><path d="M1 1 L9 5.5 L1 10 Z" fill="#4cba4c" stroke="#2a8a2a" stroke-width="0.6"/></svg>
<div class="a" style="left:793px;top:502px;width:237px;height:22px;background:linear-gradient(#e8e8e8,#dcdcdc);border:1px solid #c0c0c0"></div>
<div class="t " style="left:796.0px;top:507.6px;font-size:12.25px;color:#000;">2. Zero out inventory (Selected)</div>
<svg class="a" style="left:1015px;top:510px" width="12" height="8"><path d="M1.5 1.5 L6 6 L10.5 1.5" stroke="#444" stroke-width="1.3" fill="none"/></svg>
<div class="a" style="left:80px;top:533px;width:933px;height:384px;background:#fff;border-left:2px solid #767676;border-top:1px solid #8a8a8a"></div>
<div class="a" style="left:82px;top:534px;width:930px;height:331px;background:#0078d7"></div>
<div class="a" style="left:1013px;top:534px;width:17px;height:382px;background:#f0f0f0;border-left:1px solid #fff"></div>
<div class="a" style="left:1014px;top:552px;width:15px;height:297px;background:#cdcdcd"></div>
<svg class="a" style="left:1015px;top:539px" width="12" height="8"><path d="M1.5 6.5 L6 2 L10.5 6.5" stroke="#555" stroke-width="1.6" fill="none"/></svg>
<svg class="a" style="left:1015px;top:902px" width="12" height="8"><path d="M1.5 1.5 L6 6 L10.5 1.5" stroke="#555" stroke-width="1.6" fill="none"/></svg>
<div class="c" style="left:84px;top:536px;width:22px;height:35px;"></div>
<div class="ct" style="left:84px;width:22px;text-align:center;top:538.5px;font-size:12.3px">1</div>
<div class="c" style="left:106px;top:536px;width:122px;height:17px;"></div>
<div class="c" style="left:228px;top:536px;width:134px;height:17px;"></div>
<div class="c" style="left:363px;top:536px;width:53px;height:17px;background:linear-gradient(#93b5db,#5b92cf 55%,#3d7dc6);border-color:#0a1a2a"></div>
<div class="ct" style="left:363px;width:53px;text-align:center;top:538.3px;font-size:12.4px">Total</div>
<div class="c" style="left:416px;top:536px;width:41px;height:17px;"></div>
<div class="c" style="left:457px;top:536px;width:40px;height:17px;"></div>
<div class="c" style="left:497px;top:536px;width:40px;height:17px;"></div>
<div class="c" style="left:537px;top:536px;width:40px;height:17px;"></div>
<div class="c" style="left:577px;top:536px;width:40px;height:17px;"></div>
<div class="c" style="left:617px;top:536px;width:40px;height:17px;"></div>
<div class="c" style="left:657px;top:536px;width:40px;height:17px;"></div>
<div class="c" style="left:697px;top:536px;width:40px;height:17px;"></div>
<div class="c" style="left:737px;top:536px;width:40px;height:17px;"></div>
<div class="c" style="left:777px;top:536px;width:40px;height:17px;"></div>
<div class="c" style="left:817px;top:536px;width:40px;height:17px;"></div>
<div class="c" style="left:857px;top:536px;width:40px;height:17px;"></div>
<div class="c" style="left:897px;top:536px;width:49px;height:17px;background:linear-gradient(#d8d8d8,#f4f4f4 60%,#e8e8e8);border-color:#c8c8c8"></div>
<div class="c" style="left:946px;top:536px;width:57px;height:17px;background:linear-gradient(#d8d8d8,#f4f4f4 60%,#e8e8e8);border-color:#c8c8c8"></div>
<div class="ct" style="left:897px;width:48px;text-align:right;top:538.5px;font-size:12px;color:#fafafa;overflow:hidden">Price</div>
<div class="ct" style="left:948px;width:54px;text-align:left;top:538.5px;font-size:12px;color:#fafafa;overflow:hidden;padding-left:11px">Amount</div>
<div class="nar" style="right:717px;top:539.5px;font-size:12px;transform:scaleX(0.72)">XS</div>
<div class="nar" style="right:677px;top:539.5px;font-size:12px;transform:scaleX(0.72)">S</div>
<div class="nar" style="right:637px;top:539.5px;font-size:12px;transform:scaleX(0.72)">M</div>
<div class="nar" style="right:597px;top:539.5px;font-size:12px;transform:scaleX(0.72)">L</div>
<div class="ct" style="left:107.5px;top:538.6px;font-size:12.3px">DR6082HSPU1</div>
<div class="ct" style="left:229.5px;top:538.6px;font-size:12.3px">REAL BLACK</div>
<div class="c" style="left:106px;top:553px;width:256px;height:18px;"></div>
<div class="ct" style="left:107.5px;top:556.5px;font-size:12.3px;width:254px;overflow:hidden;letter-spacing:0.3px">hemp spandex: hemp 95%, spandex 5%. fabric</div>
<div class="c" style="left:363px;top:553px;width:53px;height:18px;"></div>
<div class="c" style="left:416px;top:553px;width:41px;height:18px;"></div>
<div class="c" style="left:457px;top:553px;width:40px;height:18px;"></div>
<div class="c" style="left:497px;top:553px;width:40px;height:18px;"></div>
<div class="c" style="left:537px;top:553px;width:40px;height:18px;"></div>
<div class="c" style="left:577px;top:553px;width:40px;height:18px;"></div>
<div class="c" style="left:617px;top:553px;width:40px;height:18px;"></div>
<div class="c" style="left:657px;top:553px;width:40px;height:18px;"></div>
<div class="c" style="left:697px;top:553px;width:40px;height:18px;"></div>
<div class="c" style="left:737px;top:553px;width:40px;height:18px;"></div>
<div class="c" style="left:777px;top:553px;width:40px;height:18px;"></div>
<div class="c" style="left:817px;top:553px;width:40px;height:18px;"></div>
<div class="c" style="left:857px;top:553px;width:40px;height:18px;"></div>
<div class="c" style="left:897px;top:553px;width:49px;height:18px;"></div>
<div class="c" style="left:946px;top:553px;width:57px;height:18px;"></div>
<div class="a" style="left:84px;top:572px;width:20px;height:17px;background:#e6e6e6;border:1px solid #cfcfcf"></div>
<div class="a" style="left:87px;top:575px;width:13px;height:11px;background:#22b02a"></div>
<svg class="a" style="left:87px;top:575px" width="14" height="12"><ellipse cx="6" cy="5.2" rx="4" ry="3" fill="#b8f0b8" stroke="#033" stroke-width="1.1" stroke-dasharray="2 0.8"/><path d="M9 7.5 L12.5 10.5" stroke="#000" stroke-width="1.5"/></svg>
<div class="c" style="left:106px;top:572px;width:256px;height:17px;"></div>
<div class="ct" style="left:107.5px;top:575px;font-size:12.3px;letter-spacing:0.15px">Faux Drop Waist Dres</div>
<div class="ct" style="left:367px;top:576px;font-size:12.3px">Memo:</div>
<div class="c" style="left:416px;top:572px;width:587px;height:17px;"></div>
<div class="c" style="left:84px;top:591px;width:22px;height:35px;"></div>
<div class="ct" style="left:84px;width:22px;text-align:center;top:593.5px;font-size:12.3px">2</div>
<div class="c" style="left:106px;top:591px;width:122px;height:17px;"></div>
<div class="c" style="left:228px;top:591px;width:134px;height:17px;"></div>
<div class="c" style="left:363px;top:591px;width:53px;height:17px;background:linear-gradient(#93b5db,#5b92cf 55%,#3d7dc6);border-color:#0a1a2a"></div>
<div class="ct" style="left:363px;width:53px;text-align:center;top:593.3px;font-size:12.4px">Total</div>
<div class="c" style="left:416px;top:591px;width:41px;height:17px;"></div>
<div class="c" style="left:457px;top:591px;width:40px;height:17px;"></div>
<div class="c" style="left:497px;top:591px;width:40px;height:17px;"></div>
<div class="c" style="left:537px;top:591px;width:40px;height:17px;"></div>
<div class="c" style="left:577px;top:591px;width:40px;height:17px;"></div>
<div class="c" style="left:617px;top:591px;width:40px;height:17px;"></div>
<div class="c" style="left:657px;top:591px;width:40px;height:17px;"></div>
<div class="c" style="left:697px;top:591px;width:40px;height:17px;"></div>
<div class="c" style="left:737px;top:591px;width:40px;height:17px;"></div>
<div class="c" style="left:777px;top:591px;width:40px;height:17px;"></div>
<div class="c" style="left:817px;top:591px;width:40px;height:17px;"></div>
<div class="c" style="left:857px;top:591px;width:40px;height:17px;"></div>
<div class="c" style="left:897px;top:591px;width:49px;height:17px;background:linear-gradient(#d8d8d8,#f4f4f4 60%,#e8e8e8);border-color:#c8c8c8"></div>
<div class="c" style="left:946px;top:591px;width:57px;height:17px;background:linear-gradient(#d8d8d8,#f4f4f4 60%,#e8e8e8);border-color:#c8c8c8"></div>
<div class="ct" style="left:897px;width:48px;text-align:right;top:593.5px;font-size:12px;color:#fafafa;overflow:hidden">Price</div>
<div class="ct" style="left:948px;width:54px;text-align:left;top:593.5px;font-size:12px;color:#fafafa;overflow:hidden;padding-left:11px">Amount</div>
<div class="nar" style="right:717px;top:594.5px;font-size:12px;transform:scaleX(0.72)">XS</div>
<div class="nar" style="right:677px;top:594.5px;font-size:12px;transform:scaleX(0.72)">S</div>
<div class="nar" style="right:637px;top:594.5px;font-size:12px;transform:scaleX(0.72)">M</div>
<div class="nar" style="right:597px;top:594.5px;font-size:12px;transform:scaleX(0.72)">L</div>
<div class="ct" style="left:107.5px;top:593.6px;font-size:12.3px">DR6083VIS</div>
<div class="ct" style="left:229.5px;top:593.6px;font-size:12.3px">REAL BLACK</div>
<div class="c" style="left:106px;top:608px;width:256px;height:18px;"></div>
<div class="ct" style="left:107.5px;top:611.5px;font-size:12.3px;width:254px;overflow:hidden;letter-spacing:0.3px">viscose: viscose 91%, spandex 9%</div>
<div class="c" style="left:363px;top:608px;width:53px;height:18px;"></div>
<div class="c" style="left:416px;top:608px;width:41px;height:18px;"></div>
<div class="c" style="left:457px;top:608px;width:40px;height:18px;"></div>
<div class="c" style="left:497px;top:608px;width:40px;height:18px;"></div>
<div class="c" style="left:537px;top:608px;width:40px;height:18px;"></div>
<div class="c" style="left:577px;top:608px;width:40px;height:18px;"></div>
<div class="c" style="left:617px;top:608px;width:40px;height:18px;"></div>
<div class="c" style="left:657px;top:608px;width:40px;height:18px;"></div>
<div class="c" style="left:697px;top:608px;width:40px;height:18px;"></div>
<div class="c" style="left:737px;top:608px;width:40px;height:18px;"></div>
<div class="c" style="left:777px;top:608px;width:40px;height:18px;"></div>
<div class="c" style="left:817px;top:608px;width:40px;height:18px;"></div>
<div class="c" style="left:857px;top:608px;width:40px;height:18px;"></div>
<div class="c" style="left:897px;top:608px;width:49px;height:18px;"></div>
<div class="c" style="left:946px;top:608px;width:57px;height:18px;"></div>
<div class="nar" style="right:758px;top:613.5px;font-size:9px;transform:scaleX(0.75)">-38</div>
<div class="nar" style="right:717px;top:613.5px;font-size:9px;transform:scaleX(0.75)">-12</div>
<div class="nar" style="right:677px;top:613.5px;font-size:9px;transform:scaleX(0.75)">-5</div>
<div class="nar" style="right:637px;top:613.5px;font-size:9px;transform:scaleX(0.75)">-7</div>
<div class="nar" style="right:597px;top:613.5px;font-size:9px;transform:scaleX(0.75)">-14</div>
<div class="a" style="left:84px;top:627px;width:20px;height:17px;background:#e6e6e6;border:1px solid #cfcfcf"></div>
<div class="a" style="left:87px;top:630px;width:13px;height:11px;background:#22b02a"></div>
<svg class="a" style="left:87px;top:630px" width="14" height="12"><ellipse cx="6" cy="5.2" rx="4" ry="3" fill="#b8f0b8" stroke="#033" stroke-width="1.1" stroke-dasharray="2 0.8"/><path d="M9 7.5 L12.5 10.5" stroke="#000" stroke-width="1.5"/></svg>
<div class="c" style="left:106px;top:627px;width:256px;height:17px;"></div>
<div class="ct" style="left:107.5px;top:630px;font-size:12.3px;letter-spacing:0.15px">Cutout Bck/Wst Dres</div>
<div class="ct" style="left:367px;top:631px;font-size:12.3px">Memo:</div>
<div class="c" style="left:416px;top:627px;width:587px;height:17px;"></div>
<div class="c" style="left:84px;top:646px;width:22px;height:35px;"></div>
<div class="ct" style="left:84px;width:22px;text-align:center;top:648.5px;font-size:12.3px">3</div>
<div class="c" style="left:106px;top:646px;width:122px;height:17px;"></div>
<div class="c" style="left:228px;top:646px;width:134px;height:17px;"></div>
<div class="c" style="left:363px;top:646px;width:53px;height:17px;background:linear-gradient(#93b5db,#5b92cf 55%,#3d7dc6);border-color:#0a1a2a"></div>
<div class="ct" style="left:363px;width:53px;text-align:center;top:648.3px;font-size:12.4px">Total</div>
<div class="c" style="left:416px;top:646px;width:41px;height:17px;"></div>
<div class="c" style="left:457px;top:646px;width:40px;height:17px;"></div>
<div class="c" style="left:497px;top:646px;width:40px;height:17px;"></div>
<div class="c" style="left:537px;top:646px;width:40px;height:17px;"></div>
<div class="c" style="left:577px;top:646px;width:40px;height:17px;"></div>
<div class="c" style="left:617px;top:646px;width:40px;height:17px;"></div>
<div class="c" style="left:657px;top:646px;width:40px;height:17px;"></div>
<div class="c" style="left:697px;top:646px;width:40px;height:17px;"></div>
<div class="c" style="left:737px;top:646px;width:40px;height:17px;"></div>
<div class="c" style="left:777px;top:646px;width:40px;height:17px;"></div>
<div class="c" style="left:817px;top:646px;width:40px;height:17px;"></div>
<div class="c" style="left:857px;top:646px;width:40px;height:17px;"></div>
<div class="c" style="left:897px;top:646px;width:49px;height:17px;background:linear-gradient(#d8d8d8,#f4f4f4 60%,#e8e8e8);border-color:#c8c8c8"></div>
<div class="c" style="left:946px;top:646px;width:57px;height:17px;background:linear-gradient(#d8d8d8,#f4f4f4 60%,#e8e8e8);border-color:#c8c8c8"></div>
<div class="ct" style="left:897px;width:48px;text-align:right;top:648.5px;font-size:12px;color:#fafafa;overflow:hidden">Price</div>
<div class="ct" style="left:948px;width:54px;text-align:left;top:648.5px;font-size:12px;color:#fafafa;overflow:hidden;padding-left:11px">Amount</div>
<div class="nar" style="right:717px;top:649.5px;font-size:12px;transform:scaleX(0.72)">XS</div>
<div class="nar" style="right:677px;top:649.5px;font-size:12px;transform:scaleX(0.72)">S</div>
<div class="nar" style="right:637px;top:649.5px;font-size:12px;transform:scaleX(0.72)">M</div>
<div class="nar" style="right:597px;top:649.5px;font-size:12px;transform:scaleX(0.72)">L</div>
<div class="ct" style="left:107.5px;top:648.6px;font-size:12.3px">DR6084VIS</div>
<div class="ct" style="left:229.5px;top:648.6px;font-size:12.3px">REAL BLACK</div>
<div class="c" style="left:106px;top:663px;width:256px;height:18px;"></div>
<div class="ct" style="left:107.5px;top:666.5px;font-size:12.3px;width:254px;overflow:hidden;letter-spacing:0.3px">viscose: 91% viscose, 9% spandex</div>
<div class="c" style="left:363px;top:663px;width:53px;height:18px;"></div>
<div class="c" style="left:416px;top:663px;width:41px;height:18px;"></div>
<div class="c" style="left:457px;top:663px;width:40px;height:18px;"></div>
<div class="c" style="left:497px;top:663px;width:40px;height:18px;"></div>
<div class="c" style="left:537px;top:663px;width:40px;height:18px;"></div>
<div class="c" style="left:577px;top:663px;width:40px;height:18px;"></div>
<div class="c" style="left:617px;top:663px;width:40px;height:18px;"></div>
<div class="c" style="left:657px;top:663px;width:40px;height:18px;"></div>
<div class="c" style="left:697px;top:663px;width:40px;height:18px;"></div>
<div class="c" style="left:737px;top:663px;width:40px;height:18px;"></div>
<div class="c" style="left:777px;top:663px;width:40px;height:18px;"></div>
<div class="c" style="left:817px;top:663px;width:40px;height:18px;"></div>
<div class="c" style="left:857px;top:663px;width:40px;height:18px;"></div>
<div class="c" style="left:897px;top:663px;width:49px;height:18px;"></div>
<div class="c" style="left:946px;top:663px;width:57px;height:18px;"></div>
<div class="a" style="left:84px;top:682px;width:20px;height:17px;background:#e6e6e6;border:1px solid #cfcfcf"></div>
<div class="a" style="left:87px;top:685px;width:13px;height:11px;background:#22b02a"></div>
<svg class="a" style="left:87px;top:685px" width="14" height="12"><ellipse cx="6" cy="5.2" rx="4" ry="3" fill="#b8f0b8" stroke="#033" stroke-width="1.1" stroke-dasharray="2 0.8"/><path d="M9 7.5 L12.5 10.5" stroke="#000" stroke-width="1.5"/></svg>
<div class="c" style="left:106px;top:682px;width:256px;height:17px;"></div>
<div class="ct" style="left:107.5px;top:685px;font-size:12.3px;letter-spacing:0.15px">Racer Back Tank Dres</div>
<div class="ct" style="left:367px;top:686px;font-size:12.3px">Memo:</div>
<div class="c" style="left:416px;top:682px;width:587px;height:17px;"></div>
<div class="c" style="left:84px;top:701px;width:22px;height:35px;"></div>
<div class="ct" style="left:84px;width:22px;text-align:center;top:703.5px;font-size:12.3px">4</div>
<div class="c" style="left:106px;top:701px;width:122px;height:17px;"></div>
<div class="c" style="left:228px;top:701px;width:134px;height:17px;"></div>
<div class="c" style="left:363px;top:701px;width:53px;height:17px;background:linear-gradient(#93b5db,#5b92cf 55%,#3d7dc6);border-color:#0a1a2a"></div>
<div class="ct" style="left:363px;width:53px;text-align:center;top:703.3px;font-size:12.4px">Total</div>
<div class="c" style="left:416px;top:701px;width:41px;height:17px;"></div>
<div class="c" style="left:457px;top:701px;width:40px;height:17px;"></div>
<div class="c" style="left:497px;top:701px;width:40px;height:17px;"></div>
<div class="c" style="left:537px;top:701px;width:40px;height:17px;"></div>
<div class="c" style="left:577px;top:701px;width:40px;height:17px;"></div>
<div class="c" style="left:617px;top:701px;width:40px;height:17px;"></div>
<div class="c" style="left:657px;top:701px;width:40px;height:17px;"></div>
<div class="c" style="left:697px;top:701px;width:40px;height:17px;"></div>
<div class="c" style="left:737px;top:701px;width:40px;height:17px;"></div>
<div class="c" style="left:777px;top:701px;width:40px;height:17px;"></div>
<div class="c" style="left:817px;top:701px;width:40px;height:17px;"></div>
<div class="c" style="left:857px;top:701px;width:40px;height:17px;"></div>
<div class="c" style="left:897px;top:701px;width:49px;height:17px;background:linear-gradient(#d8d8d8,#f4f4f4 60%,#e8e8e8);border-color:#c8c8c8"></div>
<div class="c" style="left:946px;top:701px;width:57px;height:17px;background:linear-gradient(#d8d8d8,#f4f4f4 60%,#e8e8e8);border-color:#c8c8c8"></div>
<div class="ct" style="left:897px;width:48px;text-align:right;top:703.5px;font-size:12px;color:#fafafa;overflow:hidden">Price</div>
<div class="ct" style="left:948px;width:54px;text-align:left;top:703.5px;font-size:12px;color:#fafafa;overflow:hidden;padding-left:11px">Amount</div>
<div class="nar" style="right:717px;top:704.5px;font-size:12px;transform:scaleX(0.72)">XS</div>
<div class="nar" style="right:677px;top:704.5px;font-size:12px;transform:scaleX(0.72)">S</div>
<div class="nar" style="right:637px;top:704.5px;font-size:12px;transform:scaleX(0.72)">M</div>
<div class="nar" style="right:597px;top:704.5px;font-size:12px;transform:scaleX(0.72)">L</div>
<div class="ct" style="left:107.5px;top:703.6px;font-size:12.3px">DR6102S</div>
<div class="ct" style="left:229.5px;top:703.6px;font-size:12.3px">REAL BLACK</div>
<div class="c" style="left:106px;top:718px;width:256px;height:18px;"></div>
<div class="ct" style="left:107.5px;top:721.5px;font-size:12.3px;width:254px;overflow:hidden;letter-spacing:0.3px">spandex: 86% nylon, 14% spandex</div>
<div class="c" style="left:363px;top:718px;width:53px;height:18px;"></div>
<div class="c" style="left:416px;top:718px;width:41px;height:18px;"></div>
<div class="c" style="left:457px;top:718px;width:40px;height:18px;"></div>
<div class="c" style="left:497px;top:718px;width:40px;height:18px;"></div>
<div class="c" style="left:537px;top:718px;width:40px;height:18px;"></div>
<div class="c" style="left:577px;top:718px;width:40px;height:18px;"></div>
<div class="c" style="left:617px;top:718px;width:40px;height:18px;"></div>
<div class="c" style="left:657px;top:718px;width:40px;height:18px;"></div>
<div class="c" style="left:697px;top:718px;width:40px;height:18px;"></div>
<div class="c" style="left:737px;top:718px;width:40px;height:18px;"></div>
<div class="c" style="left:777px;top:718px;width:40px;height:18px;"></div>
<div class="c" style="left:817px;top:718px;width:40px;height:18px;"></div>
<div class="c" style="left:857px;top:718px;width:40px;height:18px;"></div>
<div class="c" style="left:897px;top:718px;width:49px;height:18px;"></div>
<div class="c" style="left:946px;top:718px;width:57px;height:18px;"></div>
<div class="nar" style="right:758px;top:723.5px;font-size:9px;transform:scaleX(0.75)">-59</div>
<div class="nar" style="right:717px;top:723.5px;font-size:9px;transform:scaleX(0.75)">-6</div>
<div class="nar" style="right:677px;top:723.5px;font-size:9px;transform:scaleX(0.75)">-9</div>
<div class="nar" style="right:637px;top:723.5px;font-size:9px;transform:scaleX(0.75)">-12</div>
<div class="nar" style="right:597px;top:723.5px;font-size:9px;transform:scaleX(0.75)">-32</div>
<div class="a" style="left:84px;top:737px;width:20px;height:17px;background:#e6e6e6;border:1px solid #cfcfcf"></div>
<div class="a" style="left:87px;top:740px;width:13px;height:11px;background:#22b02a"></div>
<svg class="a" style="left:87px;top:740px" width="14" height="12"><ellipse cx="6" cy="5.2" rx="4" ry="3" fill="#b8f0b8" stroke="#033" stroke-width="1.1" stroke-dasharray="2 0.8"/><path d="M9 7.5 L12.5 10.5" stroke="#000" stroke-width="1.5"/></svg>
<div class="c" style="left:106px;top:737px;width:256px;height:17px;"></div>
<div class="ct" style="left:107.5px;top:740px;font-size:12.3px;letter-spacing:0.15px">Cut Out Mini Dress</div>
<div class="ct" style="left:367px;top:741px;font-size:12.3px">Memo:</div>
<div class="c" style="left:416px;top:737px;width:587px;height:17px;"></div>
<div class="c" style="left:84px;top:756px;width:22px;height:35px;"></div>
<div class="ct" style="left:84px;width:22px;text-align:center;top:758.5px;font-size:12.3px">5</div>
<div class="c" style="left:106px;top:756px;width:122px;height:17px;"></div>
<div class="c" style="left:228px;top:756px;width:134px;height:17px;"></div>
<div class="c" style="left:363px;top:756px;width:53px;height:17px;background:linear-gradient(#93b5db,#5b92cf 55%,#3d7dc6);border-color:#0a1a2a"></div>
<div class="ct" style="left:363px;width:53px;text-align:center;top:758.3px;font-size:12.4px">Total</div>
<div class="c" style="left:416px;top:756px;width:41px;height:17px;"></div>
<div class="c" style="left:457px;top:756px;width:40px;height:17px;"></div>
<div class="c" style="left:497px;top:756px;width:40px;height:17px;"></div>
<div class="c" style="left:537px;top:756px;width:40px;height:17px;"></div>
<div class="c" style="left:577px;top:756px;width:40px;height:17px;"></div>
<div class="c" style="left:617px;top:756px;width:40px;height:17px;"></div>
<div class="c" style="left:657px;top:756px;width:40px;height:17px;"></div>
<div class="c" style="left:697px;top:756px;width:40px;height:17px;"></div>
<div class="c" style="left:737px;top:756px;width:40px;height:17px;"></div>
<div class="c" style="left:777px;top:756px;width:40px;height:17px;"></div>
<div class="c" style="left:817px;top:756px;width:40px;height:17px;"></div>
<div class="c" style="left:857px;top:756px;width:40px;height:17px;"></div>
<div class="c" style="left:897px;top:756px;width:49px;height:17px;background:linear-gradient(#d8d8d8,#f4f4f4 60%,#e8e8e8);border-color:#c8c8c8"></div>
<div class="c" style="left:946px;top:756px;width:57px;height:17px;background:linear-gradient(#d8d8d8,#f4f4f4 60%,#e8e8e8);border-color:#c8c8c8"></div>
<div class="ct" style="left:897px;width:48px;text-align:right;top:758.5px;font-size:12px;color:#fafafa;overflow:hidden">Price</div>
<div class="ct" style="left:948px;width:54px;text-align:left;top:758.5px;font-size:12px;color:#fafafa;overflow:hidden;padding-left:11px">Amount</div>
<div class="nar" style="right:717px;top:759.5px;font-size:12px;transform:scaleX(0.72)">XS</div>
<div class="nar" style="right:677px;top:759.5px;font-size:12px;transform:scaleX(0.72)">S</div>
<div class="nar" style="right:637px;top:759.5px;font-size:12px;transform:scaleX(0.72)">M</div>
<div class="nar" style="right:597px;top:759.5px;font-size:12px;transform:scaleX(0.72)">L</div>
<div class="ct" style="left:107.5px;top:758.6px;font-size:12.3px">DR6102UF</div>
<div class="ct" style="left:229.5px;top:758.6px;font-size:12.3px">BLK/BK-Black/Black</div>
<div class="c" style="left:106px;top:773px;width:256px;height:18px;"></div>
<div class="ct" style="left:107.5px;top:776.5px;font-size:12.3px;width:254px;overflow:hidden;letter-spacing:0.3px">chiffon: 100% silk, charmeuse 100% silk</div>
<div class="c" style="left:363px;top:773px;width:53px;height:18px;"></div>
<div class="c" style="left:416px;top:773px;width:41px;height:18px;"></div>
<div class="c" style="left:457px;top:773px;width:40px;height:18px;"></div>
<div class="c" style="left:497px;top:773px;width:40px;height:18px;"></div>
<div class="c" style="left:537px;top:773px;width:40px;height:18px;"></div>
<div class="c" style="left:577px;top:773px;width:40px;height:18px;"></div>
<div class="c" style="left:617px;top:773px;width:40px;height:18px;"></div>
<div class="c" style="left:657px;top:773px;width:40px;height:18px;"></div>
<div class="c" style="left:697px;top:773px;width:40px;height:18px;"></div>
<div class="c" style="left:737px;top:773px;width:40px;height:18px;"></div>
<div class="c" style="left:777px;top:773px;width:40px;height:18px;"></div>
<div class="c" style="left:817px;top:773px;width:40px;height:18px;"></div>
<div class="c" style="left:857px;top:773px;width:40px;height:18px;"></div>
<div class="c" style="left:897px;top:773px;width:49px;height:18px;"></div>
<div class="c" style="left:946px;top:773px;width:57px;height:18px;"></div>
<div class="a" style="left:84px;top:792px;width:20px;height:17px;background:#e6e6e6;border:1px solid #cfcfcf"></div>
<div class="a" style="left:87px;top:795px;width:13px;height:11px;background:#22b02a"></div>
<svg class="a" style="left:87px;top:795px" width="14" height="12"><ellipse cx="6" cy="5.2" rx="4" ry="3" fill="#b8f0b8" stroke="#033" stroke-width="1.1" stroke-dasharray="2 0.8"/><path d="M9 7.5 L12.5 10.5" stroke="#000" stroke-width="1.5"/></svg>
<div class="c" style="left:106px;top:792px;width:256px;height:17px;"></div>
<div class="ct" style="left:107.5px;top:795px;font-size:12.3px;letter-spacing:0.15px">Boxy Fit Dress</div>
<div class="ct" style="left:367px;top:796px;font-size:12.3px">Memo:</div>
<div class="c" style="left:416px;top:792px;width:587px;height:17px;"></div>
<div class="c" style="left:84px;top:811px;width:22px;height:35px;"></div>
<div class="ct" style="left:84px;width:22px;text-align:center;top:813.5px;font-size:12.3px">6</div>
<div class="c" style="left:106px;top:811px;width:122px;height:17px;"></div>
<div class="c" style="left:228px;top:811px;width:134px;height:17px;"></div>
<div class="c" style="left:363px;top:811px;width:53px;height:17px;background:linear-gradient(#93b5db,#5b92cf 55%,#3d7dc6);border-color:#0a1a2a"></div>
<div class="ct" style="left:363px;width:53px;text-align:center;top:813.3px;font-size:12.4px">Total</div>
<div class="c" style="left:416px;top:811px;width:41px;height:17px;"></div>
<div class="c" style="left:457px;top:811px;width:40px;height:17px;"></div>
<div class="c" style="left:497px;top:811px;width:40px;height:17px;"></div>
<div class="c" style="left:537px;top:811px;width:40px;height:17px;"></div>
<div class="c" style="left:577px;top:811px;width:40px;height:17px;"></div>
<div class="c" style="left:617px;top:811px;width:40px;height:17px;"></div>
<div class="c" style="left:657px;top:811px;width:40px;height:17px;"></div>
<div class="c" style="left:697px;top:811px;width:40px;height:17px;"></div>
<div class="c" style="left:737px;top:811px;width:40px;height:17px;"></div>
<div class="c" style="left:777px;top:811px;width:40px;height:17px;"></div>
<div class="c" style="left:817px;top:811px;width:40px;height:17px;"></div>
<div class="c" style="left:857px;top:811px;width:40px;height:17px;"></div>
<div class="c" style="left:897px;top:811px;width:49px;height:17px;background:linear-gradient(#d8d8d8,#f4f4f4 60%,#e8e8e8);border-color:#c8c8c8"></div>
<div class="c" style="left:946px;top:811px;width:57px;height:17px;background:linear-gradient(#d8d8d8,#f4f4f4 60%,#e8e8e8);border-color:#c8c8c8"></div>
<div class="ct" style="left:897px;width:48px;text-align:right;top:813.5px;font-size:12px;color:#fafafa;overflow:hidden">Price</div>
<div class="ct" style="left:948px;width:54px;text-align:left;top:813.5px;font-size:12px;color:#fafafa;overflow:hidden;padding-left:11px">Amount</div>
<div class="nar" style="right:717px;top:814.5px;font-size:12px;transform:scaleX(0.72)">XS</div>
<div class="nar" style="right:677px;top:814.5px;font-size:12px;transform:scaleX(0.72)">S</div>
<div class="nar" style="right:637px;top:814.5px;font-size:12px;transform:scaleX(0.72)">M</div>
<div class="nar" style="right:597px;top:814.5px;font-size:12px;transform:scaleX(0.72)">L</div>
<div class="ct" style="left:107.5px;top:813.6px;font-size:12.3px">DR6102UF</div>
<div class="ct" style="left:229.5px;top:813.6px;font-size:12.3px">ICE/WH-Ice/White</div>
<div class="c" style="left:106px;top:828px;width:256px;height:18px;"></div>
<div class="ct" style="left:107.5px;top:831.5px;font-size:12.3px;width:254px;overflow:hidden;letter-spacing:0.3px">charmeuse: 100% silk. chiffon 100% silk</div>
<div class="c" style="left:363px;top:828px;width:53px;height:18px;"></div>
<div class="c" style="left:416px;top:828px;width:41px;height:18px;"></div>
<div class="c" style="left:457px;top:828px;width:40px;height:18px;"></div>
<div class="c" style="left:497px;top:828px;width:40px;height:18px;"></div>
<div class="c" style="left:537px;top:828px;width:40px;height:18px;"></div>
<div class="c" style="left:577px;top:828px;width:40px;height:18px;"></div>
<div class="c" style="left:617px;top:828px;width:40px;height:18px;"></div>
<div class="c" style="left:657px;top:828px;width:40px;height:18px;"></div>
<div class="c" style="left:697px;top:828px;width:40px;height:18px;"></div>
<div class="c" style="left:737px;top:828px;width:40px;height:18px;"></div>
<div class="c" style="left:777px;top:828px;width:40px;height:18px;"></div>
<div class="c" style="left:817px;top:828px;width:40px;height:18px;"></div>
<div class="c" style="left:857px;top:828px;width:40px;height:18px;"></div>
<div class="c" style="left:897px;top:828px;width:49px;height:18px;"></div>
<div class="c" style="left:946px;top:828px;width:57px;height:18px;"></div>
<div class="a" style="left:84px;top:847px;width:20px;height:17px;background:#e6e6e6;border:1px solid #cfcfcf"></div>
<div class="a" style="left:87px;top:850px;width:13px;height:11px;background:#22b02a"></div>
<svg class="a" style="left:87px;top:850px" width="14" height="12"><ellipse cx="6" cy="5.2" rx="4" ry="3" fill="#b8f0b8" stroke="#033" stroke-width="1.1" stroke-dasharray="2 0.8"/><path d="M9 7.5 L12.5 10.5" stroke="#000" stroke-width="1.5"/></svg>
<div class="c" style="left:106px;top:847px;width:256px;height:17px;"></div>
<div class="ct" style="left:107.5px;top:850px;font-size:12.3px;letter-spacing:0.15px">Boxy Fit Dress</div>
<div class="ct" style="left:367px;top:851px;font-size:12.3px">Memo:</div>
<div class="c" style="left:416px;top:847px;width:587px;height:17px;"></div>
<div class="a" style="left:84px;top:897px;width:50px;height:18px;background:linear-gradient(#e4eefa,#bcd5f2 50%,#a6c6ee);border:1px solid #1a1a1a"></div>
<div class="a" style="left:135px;top:897px;width:175px;height:18px;background:linear-gradient(#e4eefa,#bcd5f2 50%,#a6c6ee);border:1px solid #1a1a1a"></div>
<div class="a" style="left:310px;top:897px;width:106px;height:18px;background:linear-gradient(#e4eefa,#bcd5f2 50%,#a6c6ee);border:1px solid #1a1a1a"></div>
<div class="a" style="left:417px;top:897px;width:39px;height:18px;background:linear-gradient(#e4eefa,#bcd5f2 50%,#a6c6ee);border:1px solid #1a1a1a"></div>
<div class="a" style="left:458px;top:897px;width:39px;height:18px;background:linear-gradient(#e4eefa,#bcd5f2 50%,#a6c6ee);border:1px solid #1a1a1a"></div>
<div class="a" style="left:498px;top:897px;width:39px;height:18px;background:linear-gradient(#e4eefa,#bcd5f2 50%,#a6c6ee);border:1px solid #1a1a1a"></div>
<div class="a" style="left:538px;top:897px;width:39px;height:18px;background:linear-gradient(#e4eefa,#bcd5f2 50%,#a6c6ee);border:1px solid #1a1a1a"></div>
<div class="a" style="left:578px;top:897px;width:39px;height:18px;background:linear-gradient(#e4eefa,#bcd5f2 50%,#a6c6ee);border:1px solid #1a1a1a"></div>
<div class="a" style="left:618px;top:897px;width:39px;height:18px;background:linear-gradient(#e4eefa,#bcd5f2 50%,#a6c6ee);border:1px solid #1a1a1a"></div>
<div class="a" style="left:658px;top:897px;width:39px;height:18px;background:linear-gradient(#e4eefa,#bcd5f2 50%,#a6c6ee);border:1px solid #1a1a1a"></div>
<div class="a" style="left:698px;top:897px;width:39px;height:18px;background:linear-gradient(#e4eefa,#bcd5f2 50%,#a6c6ee);border:1px solid #1a1a1a"></div>
<div class="a" style="left:738px;top:897px;width:39px;height:18px;background:linear-gradient(#e4eefa,#bcd5f2 50%,#a6c6ee);border:1px solid #1a1a1a"></div>
<div class="a" style="left:778px;top:897px;width:39px;height:18px;background:linear-gradient(#e4eefa,#bcd5f2 50%,#a6c6ee);border:1px solid #1a1a1a"></div>
<div class="a" style="left:818px;top:897px;width:39px;height:18px;background:linear-gradient(#e4eefa,#bcd5f2 50%,#a6c6ee);border:1px solid #1a1a1a"></div>
<div class="a" style="left:858px;top:897px;width:39px;height:18px;background:linear-gradient(#e4eefa,#bcd5f2 50%,#a6c6ee);border:1px solid #1a1a1a"></div>
<div class="a" style="left:897px;top:897px;width:104px;height:18px;background:linear-gradient(#e4eefa,#bcd5f2 50%,#a6c6ee);border:1px solid #1a1a1a"></div>
<div class="a" style="left:1001px;top:897px;width:11px;height:18px;background:linear-gradient(#e4eefa,#a6c6ee)"></div>
<div class="t " style="left:-191.0px;width:600px;text-align:center;top:900.0px;font-size:12.4px;color:#20402a;font-weight:bold;">7</div>
<div class="t " style="left:-78.0px;width:600px;text-align:center;top:900.0px;font-size:12.4px;color:#20402a;font-weight:bold;letter-spacing:0.6px">Total Qty</div>
<div class="t " style="right:759.5px;top:900.0px;font-size:12.4px;color:#20402a;font-weight:bold;">-97</div>
<div class="t " style="right:718.0px;top:900.2px;font-size:12.2px;color:#20402a;">-18</div>
<div class="t " style="right:678.0px;top:900.2px;font-size:12.2px;color:#20402a;">-14</div>
<div class="t " style="right:638.0px;top:900.2px;font-size:12.2px;color:#20402a;">-19</div>
<div class="t " style="right:598.0px;top:900.2px;font-size:12.2px;color:#20402a;">-46</div>
<div class="t " style="right:174.0px;top:900.0px;font-size:12.4px;color:#20402a;font-weight:bold;">0.00</div>
<div class="a" style="left:159px;top:42px;width:341px;height:269px;background:#f0f0f0;border:1px solid #a8a8a8;box-shadow:3px 3px 4px rgba(0,0,0,.45)"></div>
<div class="a" style="left:162px;top:44px;width:17px;height:265px;background:linear-gradient(#f4f7f9 0%,#c9d6df 25%,#7f9db3 55%,#3d6a8a 80%,#1e4a6c 100%)"></div>
<div class="t" style="left:170.5px;top:306px;font-size:16px;color:#fff;letter-spacing:1.35px;transform:rotate(-90deg);transform-origin:0 0;line-height:17px;margin-left:-8.5px">Distribution</div>
<div class="a" style="left:181px;top:130.5px;width:315px;height:1.5px;background:#141c6a;box-shadow:0 1px 0 #fff"></div>
<div class="a" style="left:181px;top:197px;width:315px;height:1.5px;background:#141c6a;box-shadow:0 1px 0 #fff"></div>
<div class="a" style="left:181px;top:222px;width:315px;height:1.5px;background:#141c6a;box-shadow:0 1px 0 #fff"></div>
<div class="a" style="left:181px;top:225px;width:316px;height:21px;background:#b9c9d1;border:1px solid #1a80e0"></div>
<div class="t " style="left:191.4px;top:46.9px;font-size:14.9px;color:#000;">Bill Of Lading</div>
<div class="t " style="left:191.4px;top:67.9px;font-size:14.9px;color:#000;">Boxing &amp; Shipping (WH)</div>
<div class="t " style="left:191.4px;top:88.9px;font-size:14.9px;color:#000;">Pick</div>
<div class="t " style="left:191.4px;top:109.9px;font-size:14.9px;color:#000;">Sales Order</div>
<div class="t " style="left:191.4px;top:135.7px;font-size:14.9px;color:#000;">Customer Service</div>
<div class="t " style="left:191.4px;top:156.9px;font-size:14.9px;color:#000;">Repair Tracking</div>
<div class="t " style="left:191.4px;top:177.7px;font-size:14.9px;color:#000;">Return Merchandise Authorization (RMA)</div>
<div class="t " style="left:191.4px;top:202.9px;font-size:14.9px;color:#000;">Product Receiving</div>
<div class="t " style="left:191.4px;top:227.4px;font-size:14.9px;color:#000;">Inventory Adjustment</div>
<div class="t " style="left:191.4px;top:248.6px;font-size:14.9px;color:#000;">Inventory Transfer (Office Use)</div>
<div class="t " style="left:191.4px;top:269.7px;font-size:14.9px;color:#000;">Inventory Transfer Shipping (WH)</div>
<div class="t " style="left:191.4px;top:290.8px;font-size:14.9px;color:#000;">Inventory Transfer Receiving (WH)</div>
<div class="a" style="left:62px;top:45.5px;width:63.5px;height:43.5px;border:3px solid #e5484a"></div>
<div class="a" style="left:180.5px;top:222px;width:162.0px;height:24.5px;border:3px solid #e5484a"></div>
<div class="a" style="left:881px;top:336px;width:76px;height:30px;border:3px solid #e5484a"></div>
<div class="a" style="left:755px;top:378px;width:250px;height:22.5px;border:3px solid #e5484a"></div>
<div class="a" style="left:792px;top:500.5px;width:239px;height:24.5px;border:3px solid #e5484a"></div>
<svg class="a" style="left:0;top:0;overflow:visible;filter:drop-shadow(2px 3px 2.5px rgba(0,0,0,.5))" width="1173" height="931"><path d="M635.8,229.8 L713.5,229.8 Q725.5,229.8 725.5,241.8 L725.5,263.4 L881,341 L725.5,273.1 L725.5,278.2 Q725.5,290.2 713.5,290.2 L635.8,290.2 Q623.8,290.2 623.8,278.2 L623.8,241.8 Q623.8,229.8 635.8,229.8Z" fill="#fff" stroke="#e5484a" stroke-width="3" stroke-linejoin="miter" stroke-miterlimit="3"/></svg>
<div class="t " style="left:372.3px;width:600px;text-align:center;top:251.4px;font-size:15.3px;color:#e5484a;transform:scaleY(1.2);transform-origin:50% 84.65%">Save</div>
<svg class="a" style="left:0;top:0;overflow:visible;filter:drop-shadow(2px 3px 2.5px rgba(0,0,0,.5))" width="1173" height="931"><path d="M547.5,439.5 L660.5,439.5 Q677.5,439.5 677.5,456.5 L677.5,458.7 L745.3,405 L677.5,468.7 L677.5,493.5 Q677.5,510.5 660.5,510.5 L547.5,510.5 Q530.5,510.5 530.5,493.5 L530.5,456.5 Q530.5,439.5 547.5,439.5Z" fill="#fff" stroke="#e5484a" stroke-width="3" stroke-linejoin="miter" stroke-miterlimit="3"/></svg>
<div class="t " style="left:302.7px;width:600px;text-align:center;top:448.7px;font-size:15.4px;color:#e5484a;transform:scaleY(1.2);transform-origin:50% 84.65%">Change status to</div>
<div class="t " style="left:302.7px;width:600px;text-align:center;top:466.5px;font-size:15.4px;color:#e5484a;transform:scaleY(1.2);transform-origin:50% 84.65%">"Adjusted" then</div>
<div class="t " style="left:302.7px;width:600px;text-align:center;top:484.3px;font-size:15.4px;color:#e5484a;transform:scaleY(1.2);transform-origin:50% 84.65%">Save</div>
<svg class="a" style="left:0;top:0;overflow:visible;filter:drop-shadow(2px 3px 2.5px rgba(0,0,0,.5))" width="1173" height="931"><path d="M1075,312.8 L1155.4,312.8 Q1170.4,312.8 1170.4,327.8 L1170.4,363.5 Q1170.4,378.5 1155.4,378.5 L1075,378.5 Q1060,378.5 1060,363.5 L1060,358.2 L996.2,407.6 L1060,348 L1060,327.8 Q1060,312.8 1075,312.8Z" fill="#fff" stroke="#e5484a" stroke-width="3" stroke-linejoin="miter" stroke-miterlimit="3"/></svg>
<div class="t " style="left:813.2px;width:600px;text-align:center;top:327.6px;font-size:15.4px;color:#e5484a;transform:scaleY(1.2);transform-origin:50% 84.65%">Select</div>
<div class="t " style="left:813.2px;width:600px;text-align:center;top:345.5px;font-size:15.4px;color:#e5484a;transform:scaleY(1.2);transform-origin:50% 84.65%">warehouse</div>
<div class="circ" style="left:341.1px;top:192.0px"><svg width="40" height="40" style="display:block"><path d="M19.8 8.5H22.4V30.5H19.8V12.4Q17.2 14.4 14.2 15.4V12.8Q17.6 11.2 19.8 8.5Z" fill="#fff"/></svg></div>
<div class="circ" style="left:23.0px;top:16.3px">2</div>
<div class="circ" style="left:589.7px;top:208.1px">3</div>
<div class="circ" style="left:1132.0px;top:270.0px">4</div>
<div class="circ" style="left:708.2px;top:202.4px">5</div>
<div class="circ" style="left:478.8px;top:423.9px">6</div>
<div class="circ" style="left:717.9px;top:280.0px">7</div>
</body></html>
